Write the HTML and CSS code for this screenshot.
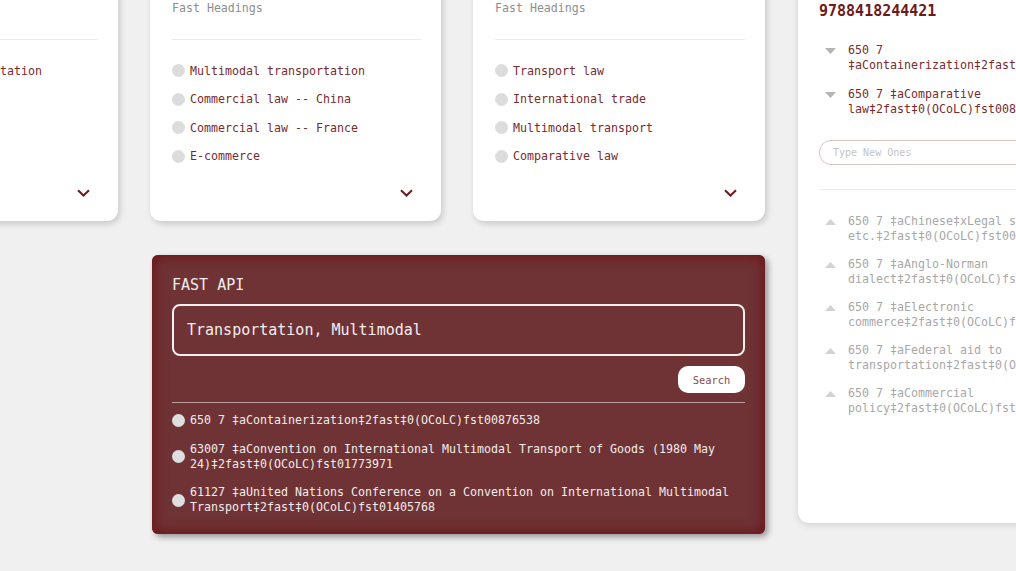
FILE: index.html
```html
<!DOCTYPE html>
<html lang="en">
<head>
<meta charset="utf-8">
<title>FAST Headings</title>
<link rel="stylesheet" href="styles.css">
</head>
<body>
<div class="board">
  <section class="card">
    <div class="card-sub">Fast Headings</div>
    <div class="rule"></div>
    <ul class="heads">
      <li><span class="dot"></span>Multimodal transportation</li>
      <li><span class="dot"></span>Freight</li>
      <li><span class="dot"></span>Containers</li>
      <li><span class="dot"></span>Shipping</li>
    </ul>
    <div class="card-foot"><svg class="chev" width="13" height="8" viewBox="0 0 13 8"><path d="M1 1.2l5.5 5.3 5.5-5.3"/></svg></div>
  </section>

  <section class="card">
    <div class="card-sub">Fast Headings</div>
    <div class="rule"></div>
    <ul class="heads">
      <li><span class="dot"></span>Multimodal transportation</li>
      <li><span class="dot"></span>Commercial law -- China</li>
      <li><span class="dot"></span>Commercial law -- France</li>
      <li><span class="dot"></span>E-commerce</li>
    </ul>
    <div class="card-foot"><svg class="chev" width="13" height="8" viewBox="0 0 13 8"><path d="M1 1.2l5.5 5.3 5.5-5.3"/></svg></div>
  </section>

  <section class="card">
    <div class="card-sub">Fast Headings</div>
    <div class="rule"></div>
    <ul class="heads">
      <li><span class="dot"></span>Transport law</li>
      <li><span class="dot"></span>International trade</li>
      <li><span class="dot"></span>Multimodal transport</li>
      <li><span class="dot"></span>Comparative law</li>
    </ul>
    <div class="card-foot"><svg class="chev" width="13" height="8" viewBox="0 0 13 8"><path d="M1 1.2l5.5 5.3 5.5-5.3"/></svg></div>
  </section>

  <aside class="side">
    <div class="isbn">9788418244421</div>
    <ul class="tags">
      <li><svg class="tri" width="11" height="6" viewBox="0 0 11 6"><polygon points="0,0 11,0 5.5,6"/></svg><span>650 7 ‡aContainerization‡2fast‡0(OCoLC)fst00876538</span></li>
      <li><svg class="tri" width="11" height="6" viewBox="0 0 11 6"><polygon points="0,0 11,0 5.5,6"/></svg><span>650 7 ‡aComparative law‡2fast‡0(OCoLC)fst00869947</span></li>
    </ul>
    <input class="new-tag" type="text" placeholder="Type New Ones">
    <div class="rule side-rule"></div>
    <ul class="tags tags-muted">
      <li><svg class="tri" width="11" height="6" viewBox="0 0 11 6"><polygon points="0,6 11,6 5.5,0"/></svg><span>650 7 ‡aChinese‡xLegal status, laws, etc.‡2fast‡0(OCoLC)fst00857428</span></li>
      <li><svg class="tri" width="11" height="6" viewBox="0 0 11 6"><polygon points="0,6 11,6 5.5,0"/></svg><span>650 7 ‡aAnglo-Norman dialect‡2fast‡0(OCoLC)fst00809457</span></li>
      <li><svg class="tri" width="11" height="6" viewBox="0 0 11 6"><polygon points="0,6 11,6 5.5,0"/></svg><span>650 7 ‡aElectronic commerce‡2fast‡0(OCoLC)fst00906906</span></li>
      <li><svg class="tri" width="11" height="6" viewBox="0 0 11 6"><polygon points="0,6 11,6 5.5,0"/></svg><span>650 7 ‡aFederal aid to transportation‡2fast‡0(OCoLC)fst00922361</span></li>
      <li><svg class="tri" width="11" height="6" viewBox="0 0 11 6"><polygon points="0,6 11,6 5.5,0"/></svg><span>650 7 ‡aCommercial policy‡2fast‡0(OCoLC)fst00869885</span></li>
    </ul>
  </aside>

  <section class="api">
    <div class="api-title">FAST API</div>
    <div class="api-input">Transportation, Multimodal</div>
    <div class="api-actions"><button class="btn-search" type="button">Search</button></div>
    <div class="api-rule"></div>
    <ul class="results">
      <li><span class="dot dot-light"></span><span>650 7 ‡aContainerization‡2fast‡0(OCoLC)fst00876538</span></li>
      <li><span class="dot dot-light"></span><span>63007 ‡aConvention on International Multimodal Transport of Goods (1980 May 24)‡2fast‡0(OCoLC)fst01773971</span></li>
      <li><span class="dot dot-light"></span><span>61127 ‡aUnited Nations Conference on a Convention on International Multimodal Transport‡2fast‡0(OCoLC)fst01405768</span></li>
    </ul>
  </section>
</div>
</body>
</html>
```

FILE: styles.css
```css
html, body {
  margin: 0;
  padding: 0;
}
body {
  background: #f0f0f0;
  overflow: hidden;
  width: 1016px;
  height: 571px;
  font-family: "DejaVu Sans Mono", "Liberation Mono", monospace;
  color: #7b2e30;
}
ul {
  list-style: none;
  margin: 0;
  padding: 0;
}

.board {
  display: grid;
  grid-template-columns: 291px 291px 292px 380px;
  grid-template-rows: auto auto;
  column-gap: 32px;
  row-gap: 34px;
  margin-top: -20px;
  margin-left: -173px;
  width: 1350px;
}

/* cards */
.card {
  background: #fff;
  border-radius: 0 0 11px 11px;
  box-shadow: 2px 3px 6px rgba(0, 0, 0, 0.16);
  padding: 20px 20px 24px 22px;
  display: flex;
  flex-direction: column;
}
.card-sub {
  font-size: 11.6px;
  line-height: 16px;
  color: #8e8e8e;
  margin-bottom: 23px;
}
.rule {
  height: 1px;
  background: #ebebeb;
}
.heads {
  padding-top: 16.5px;
}
.heads li {
  display: flex;
  align-items: center;
  gap: 5px;
  height: 28.5px;
  font-size: 11.63px;
  color: #7a2b2e;
}
.dot {
  flex: none;
  width: 13px;
  height: 13px;
  border-radius: 50%;
  background: #dcdcdc;
}
.card-foot {
  display: flex;
  justify-content: flex-end;
  margin-top: 18.5px;
  padding-right: 8px;
  height: 8px;
}
.chev {
  fill: none;
  stroke: #6b1a1d;
  stroke-width: 2;
}

/* side panel */
.side {
  grid-column: 4;
  grid-row: 1 / 3;
  margin-left: 1px;
  margin-bottom: 11px;
  background: #fff;
  border-radius: 0 0 0 11px;
  box-shadow: 0 2px 7px rgba(0, 0, 0, 0.13);
  padding: 21px 20px 0 21px;
  display: flex;
  flex-direction: column;
}
.isbn {
  font-size: 15px;
  line-height: 20px;
  font-weight: bold;
  color: #6d1a1d;
}
.tags {
  padding-left: 6px;
  display: flex;
  flex-direction: column;
  gap: 14px;
  margin-top: 21.5px;
}
.tags li {
  display: flex;
  align-items: flex-start;
  gap: 12px;
  font-size: 11.63px;
  line-height: 15px;
  color: #7a2b2e;
}
.tags li span {
  flex: 1;
  min-width: 0;
}
.tri {
  flex: none;
  margin-top: 5px;
  fill: #b5b5b5;
}
.tags-muted {
  gap: 13px;
  margin-top: 24px;
}
.tags-muted li {
  color: #a8a8a8;
}
.tags-muted .tri {
  fill: #d3d3d3;
  margin-top: 4.5px;
}
.new-tag {
  margin-top: 23.5px;
  height: 25px;
  box-sizing: border-box;
  border: 1.5px solid #d8c3c5;
  border-radius: 12px;
  padding: 0 13px;
  font-family: "DejaVu Sans Mono", monospace;
  font-size: 10px;
  color: #7a2b2e;
  background: #fff;
  outline: none;
  width: 100%;
}
.new-tag::placeholder {
  color: #c4c4c4;
}
.side-rule {
  margin-top: 24px;
}

/* FAST API panel */
.api {
  grid-column: 2 / 4;
  grid-row: 2;
  margin-left: 2px;
  background: #6f3335;
  border-radius: 6px;
  box-shadow: inset 0 0 13px 2px #6a1518, 3px 3px 6px rgba(0, 0, 0, 0.38);
  padding: 21px 20px 19px 20px;
  color: #f3ecec;
  display: flex;
  flex-direction: column;
}
.api-title {
  font-size: 15px;
  line-height: 18px;
}
.api-input {
  margin-top: 10px;
  height: 52px;
  box-sizing: border-box;
  border: 2px solid #f6efef;
  border-radius: 8px;
  padding: 0 13px;
  display: flex;
  align-items: center;
  font-size: 15px;
  color: #f5eeee;
}
.api-actions {
  display: flex;
  justify-content: flex-end;
  margin-top: 10px;
}
.btn-search {
  width: 67px;
  height: 27px;
  border: none;
  border-radius: 10px;
  background: #fff;
  color: #8a4a4d;
  font-family: "DejaVu Sans Mono", monospace;
  font-size: 10.4px;
  padding: 0;
}
.api-rule {
  margin-top: 9px;
  height: 1px;
  background: #b99c9d;
}
.results {
  padding-top: 10px;
  display: flex;
  flex-direction: column;
  gap: 13.5px;
}
.results li {
  display: flex;
  align-items: center;
  gap: 5px;
  font-size: 11.63px;
  line-height: 15px;
}
.dot-light {
  background: #dedede;
}
```
